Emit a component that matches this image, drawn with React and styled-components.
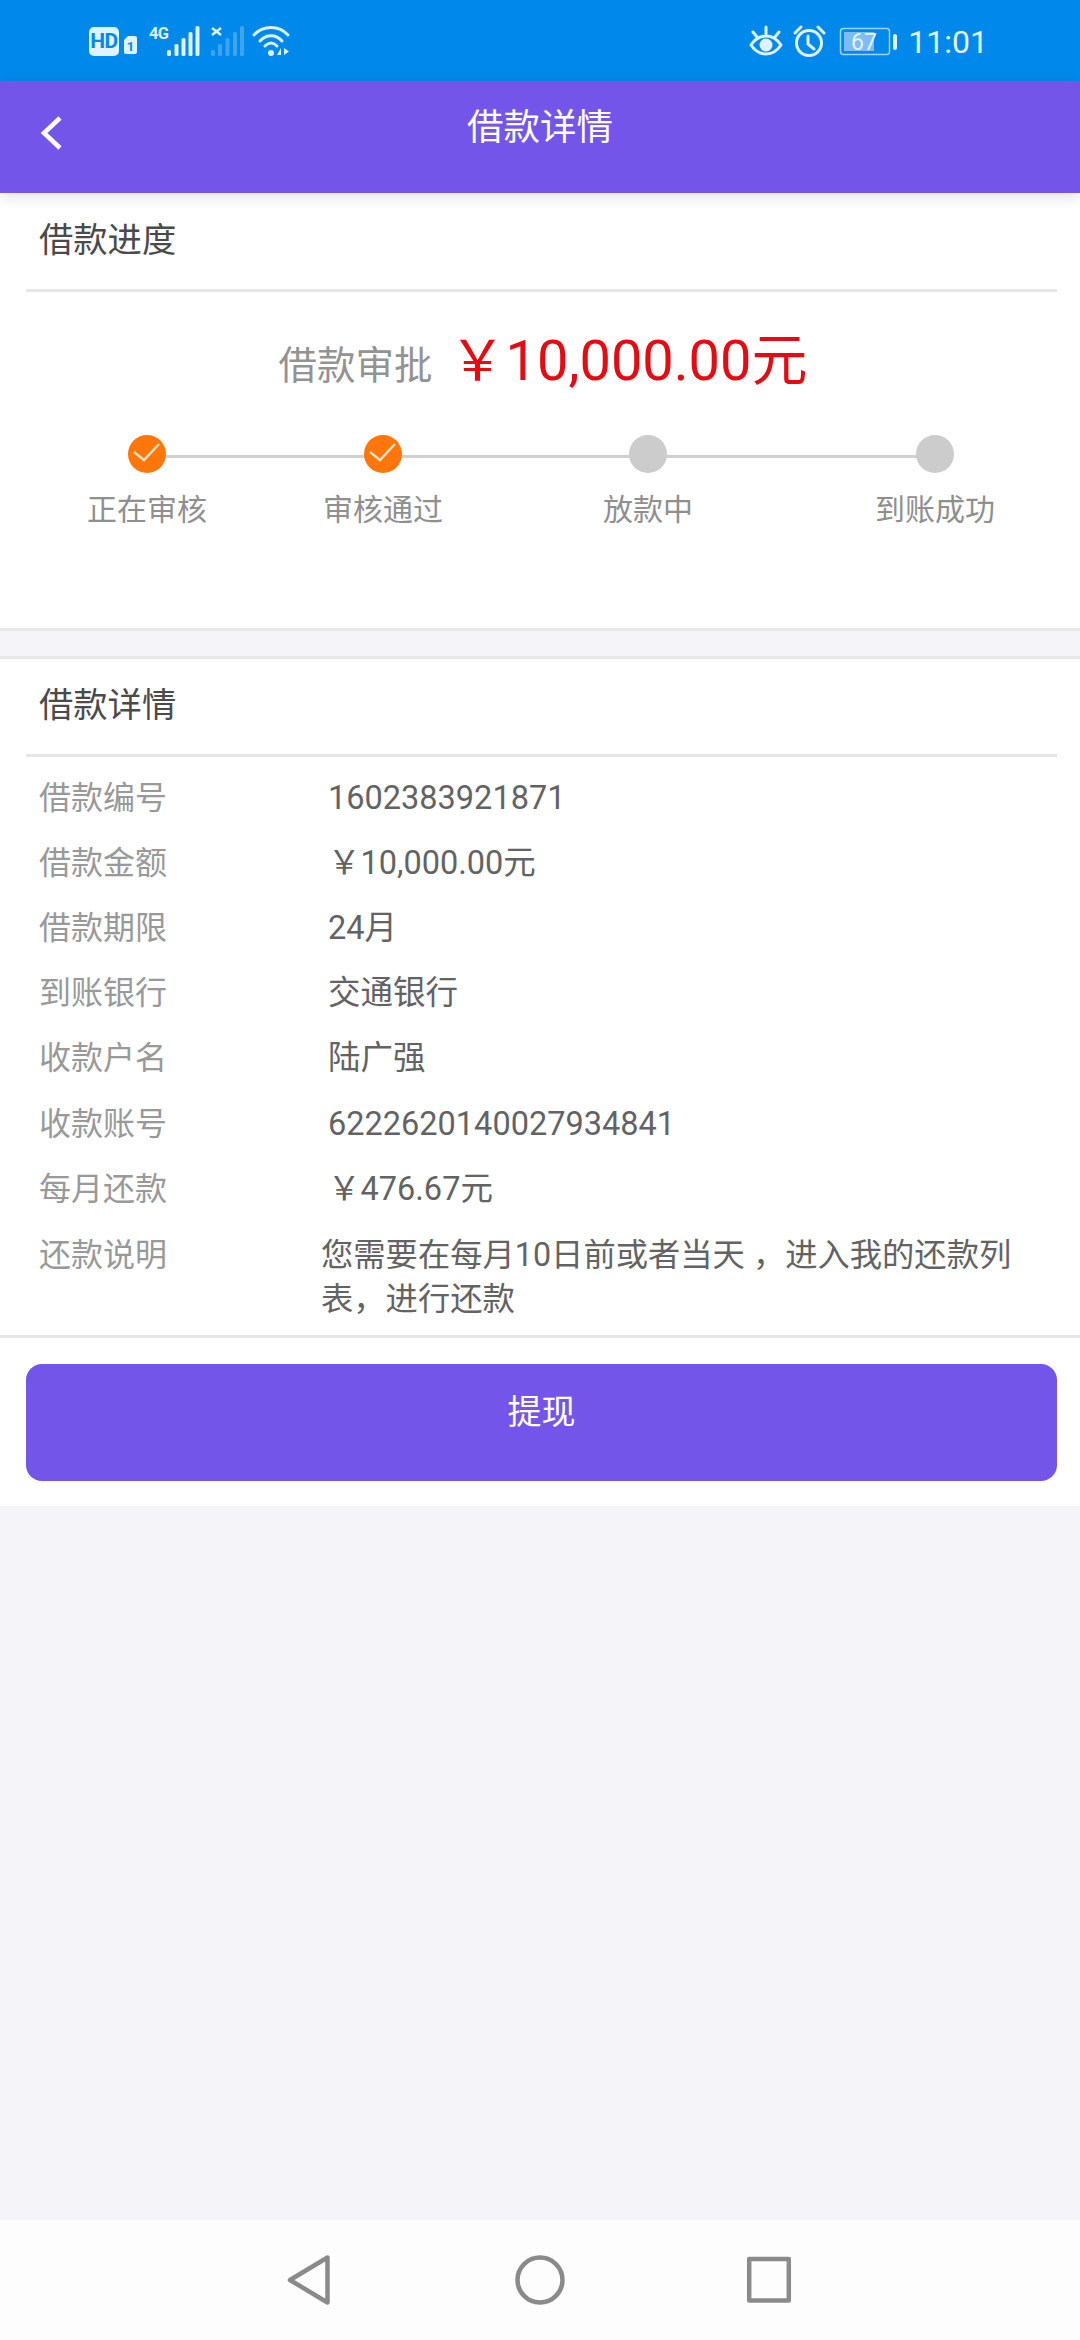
import styled, { createGlobalStyle } from "styled-components";

const Global = createGlobalStyle`
  html, body { margin: 0; padding: 0; }
  body {
    background: #f4f4f9;
    font-family: Roboto, "Noto Sans CJK SC", sans-serif;
  }
`;

const Page = styled.div`
  width: 1080px;
  height: 2340px;
  display: flex;
  flex-direction: column;
  overflow: hidden;
`;

const StatusBar = styled.div`
  height: 81px;
  flex: none;
  background: #0089ea;
  display: flex;
  align-items: center;
  justify-content: space-between;
  padding: 0 92px 0 88px;
  color: #e4f4ff;
`;

const StatusGroup = styled.div`
  display: flex;
  align-items: center;
  gap: 9px;
`;

const Clock = styled.span`
  font-size: 32px;
  line-height: 40px;
  padding-top: 2px;
`;

const Header = styled.header`
  height: 112px;
  flex: none;
  background: #7356e9;
  box-shadow: 0 4px 14px rgba(0, 0, 0, 0.12);
  position: relative;
  z-index: 1;
  display: flex;
  align-items: center;
  justify-content: center;
  padding-bottom: 26px;
  box-sizing: border-box;
`;

const BackBtn = styled.svg`
  position: absolute;
  left: 40px;
  top: 35px;
`;

const Title = styled.h1`
  margin: 0;
  font-size: 36.5px;
  font-weight: 400;
  color: #fff;
`;

const Section = styled.section`
  background: #fff;
  border-bottom: 3px solid #e8e8ea;
  border-top: ${(props) => (props.topLine ? "3px solid #e8e8ea" : "0")};
  height: ${(props) => props.h}px;
  box-sizing: border-box;
  flex: none;
`;

const SectionHead = styled.div`
  height: ${(props) => props.h}px;
  margin: 0 23px 0 26px;
  padding: 0 0 ${(props) => props.pb}px 13px;
  box-sizing: border-box;
  border-bottom: 3px solid #e6e6e8;
  display: flex;
  align-items: center;
  font-size: 34.3px;
  color: #4a4a4a;
`;

const AmountLine = styled.div`
  display: flex;
  align-items: center;
  justify-content: center;
  height: 96px;
  margin-top: 21px;
  padding-left: 6px;
`;

const AmountLabel = styled.span`
  font-size: 38.5px;
  line-height: 60px;
  color: #939393;
  margin-top: 10px;
`;

const Amount = styled.span`
  font-size: 56px;
  line-height: 60px;
  color: #e60b12;
  margin-left: 17px;
`;

const Steps = styled.div`
  position: relative;
  display: flex;
  margin-top: 20px;
  padding: 6px 0 0 67px;
`;

const Track = styled.div`
  position: absolute;
  left: 147px;
  width: 788px;
  top: 26px;
  height: 3px;
  background: #d0d0d0;
`;

const Step = styled.div`
  position: relative;
  flex: none;
  margin-left: ${(props) => props.ml}px;
  display: flex;
  flex-direction: column;
  align-items: center;
  width: 160px;
`;

const Dot = styled.div`
  width: 38px;
  height: 38px;
  border-radius: 50%;
  background: ${(props) => (props.done ? "#ff760a" : "#cccccc")};
`;

const Tick = styled.svg`
  display: block;
`;

const StepLabel = styled.div`
  margin-top: 15px;
  font-size: 30px;
  line-height: 44px;
  color: #8f8f8f;
`;

const SectionGap = styled.div`
  height: 25px;
  flex: none;
`;

const Rows = styled.div`
  padding-top: 8px;
`;

const Row = styled.div`
  display: flex;
  height: 65.2px;
  align-items: center;
  padding-left: 39px;
  line-height: 44px;
  font-size: 32px;
`;

const RowLabel = styled.span`
  width: 289px;
  flex: none;
  color: #999;
`;

const RowValue = styled.span`
  font-size: 32.5px;
  color: #636363;
`;

const NoteRow = styled.div`
  display: flex;
  padding: 12px 40px 0 39px;
  font-size: 32px;
  line-height: 44px;
`;

const NoteLabel = styled.span`
  width: 282px;
  flex: none;
  color: #999;
`;

const NoteText = styled.p`
  margin: 0;
  font-size: 32.3px;
  color: #636363;
`;

const ButtonWrap = styled.div`
  background: #fff;
  padding: 26px 23px 25px 26px;
  flex: none;
`;

const Submit = styled.button`
  display: block;
  width: 100%;
  height: 117px;
  border: 0;
  border-radius: 16px;
  background: #7356e9;
  color: #fff;
  font: inherit;
  font-size: 34px;
  padding: 0 0 26px;
`;

const Spacer = styled.div`
  flex: 1;
`;

const NavBar = styled.nav`
  height: 120px;
  flex: none;
  background: #fdfdfd;
  display: flex;
  align-items: center;
  padding-left: 283px;
`;

const NavIcon = styled.svg`
  display: block;
  flex: none;
  margin-left: ${(props) => props.ml || 0}px;
`;

const rows = [
  ["借款编号", "1602383921871"],
  ["借款金额", "￥10,000.00元"],
  ["借款期限", "24月"],
  ["到账银行", "交通银行"],
  ["收款户名", "陆广强"],
  ["收款账号", "6222620140027934841"],
  ["每月还款", "￥476.67元"],
];

const steps = [
  { ml: 0, label: "正在审核", done: true },
  { ml: 76, label: "审核通过", done: true },
  { ml: 105, label: "放款中" },
  { ml: 127, label: "到账成功" },
];

const barXs = [167, 174.5, 181.5, 188.5, 195.5];
const barTops = [49, 43, 37, 31, 25];
const weakXs = [211, 218, 225.5, 233, 240];

function LeftIcons() {
  return (
    <svg width="204" height="40" viewBox="88 20 204 40">
      <rect x="89" y="26" width="30" height="29" rx="5" fill="#def2ff" />
      <text x="104" y="47" textAnchor="middle" fontSize="21" fontWeight="700" letterSpacing="-0.5" fontFamily="Roboto, sans-serif" fill="#0089ea">HD</text>
      <path d="M124 39l4-4h7a2 2 0 0 1 2 2v14a2 2 0 0 1-2 2h-9a2 2 0 0 1-2-2z" fill="#def2ff" />
      <text x="130.5" y="50" textAnchor="middle" fontSize="13" fontWeight="700" fontFamily="Roboto, sans-serif" fill="#0089ea">1</text>
      <text x="149" y="38" fontSize="16.5" fontWeight="700" letterSpacing="-0.6" fontFamily="Roboto, sans-serif" fill="#def2ff">4G</text>
      {barXs.map((x, i) => (
        <rect key={x} x={x} y={barTops[i]} width="4" height={55 - barTops[i]} rx="1.5" fill="#def2ff" />
      ))}
      <path d="M212 27l9 7M221 27l-9 7" stroke="#def2ff" strokeWidth="2.6" />
      {weakXs.map((x, i) => (
        <rect key={x} x={x} y={barTops[i]} width="4" height={55 - barTops[i]} rx="1.5" fill="#3fa3f0" />
      ))}
      <g fill="none" stroke="#def2ff" strokeWidth="3" strokeLinecap="round">
        <path d="M254 34C263 24 279 24 288 34" />
        <path d="M260 40C266 33 276 33 282 40" />
        <path d="M265 45C269 41 273 41 277 45" />
      </g>
      <circle cx="271" cy="52" r="3" fill="#def2ff" />
      <path d="M281 47l-4 7h4zM284 47v7l5-3.5z" fill="#def2ff" />
    </svg>
  );
}

function RightIcons() {
  return (
    <svg width="152" height="40" viewBox="748 20 152 40">
      <g fill="none" stroke="#def2ff" strokeWidth="3" strokeLinecap="round" strokeLinejoin="round">
        <path d="M752 44C760 32 774 32 782 44C774 56 760 56 752 44Z" />
        <path d="M767 26v7M754 31l4 5M780 31l-4 5" />
        <circle cx="810" cy="42" r="12.5" />
        <path d="M809 35v8l6 5M796 32l6-6M825 32l-6-6" />
      </g>
      <circle cx="767" cy="44" r="6.5" fill="#def2ff" />
      <rect x="841.5" y="27.5" width="49" height="26" rx="3" fill="none" stroke="#9fd3fa" strokeWidth="1.5" />
      <rect x="845" y="31" width="30" height="19" fill="#7dbcf5" />
      <rect x="894" y="33" width="4" height="16" rx="2" fill="#def2ff" />
      <text x="865" y="48.5" textAnchor="middle" fontSize="23" fontFamily="Roboto, sans-serif" fill="#e4f4ff">67</text>
    </svg>
  );
}

function App() {
  return (
    <Page>
      <Global />
      <StatusBar>
        <LeftIcons />
        <StatusGroup>
          <RightIcons />
          <Clock>11:01</Clock>
        </StatusGroup>
      </StatusBar>
      <Header>
        <BackBtn width="24" height="36" viewBox="0 0 24 36" fill="none" stroke="#fff" strokeWidth="4.5">
          <path d="M20 2L4 17l16 15" />
        </BackBtn>
        <Title>借款详情</Title>
      </Header>
      <Section h={438}>
        <SectionHead h={99} pb={9}>借款进度</SectionHead>
        <AmountLine>
          <AmountLabel>借款审批</AmountLabel>
          <Amount>￥10,000.00元</Amount>
        </AmountLine>
        <Steps>
          <Track />
          {steps.map((s) => (
            <Step key={s.label} ml={s.ml}>
              <Dot done={s.done}>
                {s.done && (
                  <Tick width="38" height="38" viewBox="0 0 38 38" fill="none" stroke="#ffe3c8" strokeWidth="2.4">
                    <path d="M6 17l10 8L31 9" />
                  </Tick>
                )}
              </Dot>
              <StepLabel>{s.label}</StepLabel>
            </Step>
          ))}
        </Steps>
      </Section>
      <SectionGap />
      <Section h={682} topLine>
        <SectionHead h={98} pb={10}>借款详情</SectionHead>
        <Rows>
          {rows.map(([label, value]) => (
            <Row key={label}>
              <RowLabel>{label}</RowLabel>
              <RowValue>{value}</RowValue>
            </Row>
          ))}
        </Rows>
        <NoteRow>
          <NoteLabel>还款说明</NoteLabel>
          <NoteText>您需要在每月10日前或者当天 ，进入我的还款列表，进行还款</NoteText>
        </NoteRow>
      </Section>
      <ButtonWrap>
        <Submit>提现</Submit>
      </ButtonWrap>
      <Spacer />
      <NavBar>
        <NavIcon width="50" height="60" viewBox="0 0 50 60" fill="none" stroke="#8a8a8a" strokeWidth="4.5" strokeLinejoin="round">
          <path d="M7 30L44.5 7.5v45z" />
        </NavIcon>
        <NavIcon ml={182} width="50" height="60" viewBox="0 0 50 60" fill="none" stroke="#8a8a8a" strokeWidth="4.5">
          <circle cx="25" cy="30" r="22.5" />
        </NavIcon>
        <NavIcon ml={179} width="50" height="60" viewBox="0 0 50 60" fill="none" stroke="#8a8a8a" strokeWidth="4.5" strokeLinejoin="round">
          <rect x="5.2" y="9" width="39.6" height="41.5" />
        </NavIcon>
      </NavBar>
    </Page>
  );
}

export default App;
